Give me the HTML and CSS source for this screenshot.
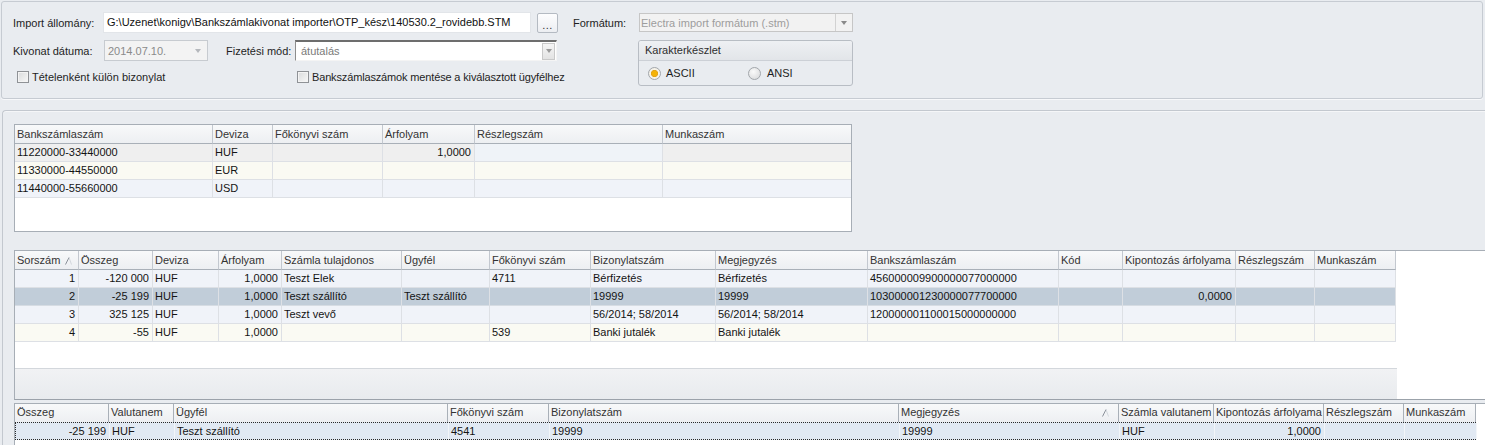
FILE: index.html
```html
<!DOCTYPE html>
<html lang="hu">
<head>
<meta charset="utf-8">
<title>Bankszámlakivonat import</title>
<link rel="stylesheet" href="styles.css">
</head>
<body>
<div class="top-panel">
  <div class="form-left">
    <div class="frow r1">
      <span class="lbl w-imp">Import állomány:</span>
      <div class="textbox">G:\Uzenet\konigv\Bankszámlakivonat importer\OTP_kész\140530.2_rovidebb.STM</div>
      <div class="btn-dots">...</div>
    </div>
    <div class="frow r2">
      <span class="lbl w-kiv">Kivonat dátuma:</span>
      <div class="combo-date"><span class="val">2014.07.10.</span><span class="tri light"></span></div>
      <span class="lbl w-fiz">Fizetési mód:</span>
      <div class="combo-pay"><span class="val">átutalás</span><span class="arrow-btn"><span class="tri"></span></span></div>
    </div>
    <div class="frow r3">
      <span class="check c1"><i class="box"></i>Tételenként külön bizonylat</span>
      <span class="check c2"><i class="box"></i>Bankszámlaszámok mentése a kiválasztott ügyfélhez</span>
    </div>
  </div>
  <div class="form-right">
    <div class="frow r1">
      <span class="lbl w-fmt">Formátum:</span>
      <div class="combo-fmt"><span class="val">Electra import formátum (.stm)</span><span class="sep-btn"><span class="tri"></span></span></div>
    </div>
    <div class="group">
      <div class="group-head">Karakterkészlet</div>
      <div class="group-body">
        <span class="radio on"><i></i>ASCII</span>
        <span class="radio off"><i></i>ANSI</span>
      </div>
    </div>
  </div>
</div>

<div class="main-panel">
  <div class="grid g1">
    <div class="row head">
      <div class="c">Bankszámlaszám</div><div class="c">Deviza</div><div class="c">Főkönyvi szám</div><div class="c">Árfolyam</div><div class="c">Részlegszám</div><div class="c">Munkaszám</div>
    </div>
    <div class="row focus">
      <div class="c">11220000-33440000</div><div class="c">HUF</div><div class="c"></div><div class="c r">1,0000</div><div class="c blue"></div><div class="c"></div>
    </div>
    <div class="row cream">
      <div class="c">11330000-44550000</div><div class="c">EUR</div><div class="c"></div><div class="c"></div><div class="c"></div><div class="c"></div>
    </div>
    <div class="row blue">
      <div class="c">11440000-55660000</div><div class="c">USD</div><div class="c"></div><div class="c"></div><div class="c"></div><div class="c"></div>
    </div>
  </div>

  <div class="grid g2">
    <div class="row head">
      <div class="c sorted">Sorszám <svg class="sort" width="7" height="8" viewBox="0 0 7 8"><path d="M0.5 7.5 L4 0.5" stroke="#8a9099" stroke-width="1" fill="none"/><path d="M4 0.5 L6.5 7.5" stroke="#d3d7dc" stroke-width="1" fill="none"/></svg></div>
      <div class="c">Összeg</div><div class="c">Deviza</div><div class="c">Árfolyam</div><div class="c">Számla tulajdonos</div><div class="c">Ügyfél</div><div class="c">Főkönyvi szám</div><div class="c">Bizonylatszám</div><div class="c">Megjegyzés</div><div class="c">Bankszámlaszám</div><div class="c">Kód</div><div class="c">Kipontozás árfolyama</div><div class="c">Részlegszám</div><div class="c">Munkaszám</div>
    </div>
    <div class="row blue">
      <div class="c r">1</div><div class="c r">-120 000</div><div class="c">HUF</div><div class="c r">1,0000</div><div class="c">Teszt Elek</div><div class="c"></div><div class="c">4711</div><div class="c">Bérfizetés</div><div class="c">Bérfizetés</div><div class="c">456000009900000077000000</div><div class="c"></div><div class="c"></div><div class="c"></div><div class="c"></div>
    </div>
    <div class="row sel">
      <div class="c r">2</div><div class="c r">-25 199</div><div class="c">HUF</div><div class="c r">1,0000</div><div class="c">Teszt szállító</div><div class="c">Teszt szállító</div><div class="c"></div><div class="c">19999</div><div class="c">19999</div><div class="c">103000001230000077700000</div><div class="c"></div><div class="c r">0,0000</div><div class="c"></div><div class="c"></div>
    </div>
    <div class="row blue">
      <div class="c r">3</div><div class="c r">325 125</div><div class="c">HUF</div><div class="c r">1,0000</div><div class="c">Teszt vevő</div><div class="c"></div><div class="c"></div><div class="c">56/2014; 58/2014</div><div class="c">56/2014; 58/2014</div><div class="c">120000001100015000000000</div><div class="c"></div><div class="c"></div><div class="c"></div><div class="c"></div>
    </div>
    <div class="row cream">
      <div class="c r">4</div><div class="c r">-55</div><div class="c">HUF</div><div class="c r">1,0000</div><div class="c"></div><div class="c"></div><div class="c">539</div><div class="c">Banki jutalék</div><div class="c">Banki jutalék</div><div class="c"></div><div class="c"></div><div class="c"></div><div class="c"></div><div class="c"></div>
    </div>
    <div class="g2-empty"></div>
    <div class="g2-footer"></div>
  </div>

  <div class="grid g3">
    <div class="row head">
      <div class="c">Összeg</div><div class="c">Valutanem</div><div class="c">Ügyfél</div><div class="c">Főkönyvi szám</div><div class="c">Bizonylatszám</div>
      <div class="c sorted-end">Megjegyzés<svg class="sort-r" width="7" height="8" viewBox="0 0 7 8"><path d="M0.5 7.5 L4 0.5" stroke="#8a9099" stroke-width="1" fill="none"/><path d="M4 0.5 L6.5 7.5" stroke="#d3d7dc" stroke-width="1" fill="none"/></svg></div>
      <div class="c">Számla valutanem</div><div class="c">Kipontozás árfolyama</div><div class="c">Részlegszám</div><div class="c">Munkaszám</div>
    </div>
    <div class="row cur">
      <div class="c r">-25 199</div><div class="c">HUF</div><div class="c">Teszt szállító</div><div class="c">4541</div><div class="c">19999</div><div class="c">19999</div><div class="c">HUF</div><div class="c r">1,0000</div><div class="c"></div><div class="c"></div>
    </div>
  </div>
</div>
</body>
</html>
```

FILE: styles.css
```css
html, body {
  margin: 0;
  padding: 0;
}
body {
  width: 1485px;
  height: 445px;
  overflow: hidden;
  background: #e9ecf0;
  font-family: "Liberation Sans", Arial, sans-serif;
  font-size: 11px;
  color: #1a1a1a;
}

/* ---------- top form panel ---------- */
.top-panel {
  box-sizing: border-box;
  margin: 1px 2px 0 1px;
  height: 98px;
  border: 1px solid #c6cbd2;
  border-radius: 3px;
  box-shadow: 0 1px 0 #f7f8fa;
  display: flex;
  padding: 10px 0 0 11px;
}
.form-left {
  width: 545px;
  flex: none;
}
.form-right {
  margin-left: 15px;
  flex: none;
}
.frow {
  display: flex;
  align-items: center;
}
.r1 { height: 21px; }
.r2 { height: 21px; margin-top: 7px; }
.r3 { height: 12px; margin-top: 10px; }

.lbl { white-space: nowrap; color: #1e1e1e; flex: none; }
.w-imp { width: 90px; }
.w-kiv { width: 91px; }
.w-fiz { width: 69px; margin-left: 18px; }
.w-fmt { width: 66px; }

.textbox {
  box-sizing: border-box;
  width: 428px;
  height: 21px;
  flex: none;
  background: #fff;
  border: 1px solid #e2e5e9;
  padding: 0 0 0 3px;
  line-height: 19px;
  white-space: nowrap;
  overflow: hidden;
  color: #111;
}
.btn-dots {
  box-sizing: border-box;
  flex: none;
  margin-left: 6px;
  width: 21px;
  height: 20px;
  margin-top: 1px;
  border: 1px solid #b4bac2;
  border-radius: 2px;
  background: linear-gradient(#fdfdfe, #eceef2);
  text-align: center;
  line-height: 22px;
  color: #333;
  letter-spacing: 0.5px;
}

.tri {
  display: inline-block;
  width: 0;
  height: 0;
  border-left: 3.5px solid transparent;
  border-right: 3.5px solid transparent;
  border-top: 4px solid #7c7f84;
}
.tri.light { border-top-color: #b5b8bc; }

.combo-date {
  box-sizing: border-box;
  flex: none;
  width: 104px;
  height: 21px;
  border: 1px solid #c7cbd0;
  background: #f3f3f3;
  display: flex;
  align-items: center;
  justify-content: space-between;
  padding: 0 6px 0 3px;
  color: #8a8a8a;
}
.combo-pay {
  box-sizing: border-box;
  flex: none;
  width: 262px;
  height: 21px;
  border-top: 2px solid #6d6d6d;
  border-left: 1px solid #8d8d8d;
  border-right: 1px solid #f4f4f4;
  border-bottom: 1px solid #f4f4f4;
  background: #fff;
  display: flex;
  align-items: center;
  justify-content: space-between;
  padding: 0 0 0 5px;
  color: #7a7a7a;
}
.arrow-btn {
  box-sizing: border-box;
  width: 13px;
  height: 17px;
  margin-right: 1px;
  border: 1px solid #c9c9c9;
  background: linear-gradient(#f5f5f5, #e3e3e3);
  display: flex;
  align-items: center;
  justify-content: center;
}
.arrow-btn .tri { border-top-color: #9b9b9b; }

.combo-fmt {
  box-sizing: border-box;
  flex: none;
  width: 214px;
  height: 19px;
  border: 1px solid #c6c6c6;
  background: #f2f2f2;
  display: flex;
  align-items: center;
  justify-content: space-between;
  padding-left: 1px;
  color: #9d9d9d;
}
.sep-btn {
  box-sizing: border-box;
  width: 17px;
  height: 17px;
  border-left: 1px solid #d2d2d2;
  display: flex;
  align-items: center;
  justify-content: center;
}
.sep-btn .tri { border-top-color: #8a8a8a; }

.check {
  display: inline-flex;
  align-items: center;
  white-space: nowrap;
  color: #1e1e1e;
  flex: none;
}
.check.c1 { margin-left: 4px; width: 280px; }
.check.c2 { letter-spacing: -0.15px; }
.check .box {
  box-sizing: border-box;
  width: 12px;
  height: 12px;
  border: 1px solid #8f9296;
  background: linear-gradient(135deg, #dadbdc, #f8f8f8);
  box-shadow: inset 0 0 0 1px #f4f4f4;
  margin-right: 3px;
  flex: none;
}

.group {
  box-sizing: border-box;
  margin: 7px 0 0 65px;
  width: 215px;
  height: 46px;
  border: 1px solid #b8bdc4;
  border-radius: 3px;
  overflow: hidden;
}
.group-head {
  height: 19px;
  border-bottom: 1px solid #ccd0d6;
  background: linear-gradient(#eef0f3, #e2e5e9);
  padding-left: 6px;
  line-height: 19px;
  color: #2e2e2e;
}
.group-body {
  display: flex;
  align-items: center;
  height: 24px;
  padding-left: 9px;
}
.radio {
  display: inline-flex;
  align-items: center;
  color: #1e1e1e;
  flex: none;
}
.radio i {
  box-sizing: border-box;
  width: 13px;
  height: 13px;
  border-radius: 50%;
  border: 1px solid #a2a6ab;
  margin-right: 5px;
  flex: none;
}
.radio.on { width: 100px; }
.radio.on i {
  background: radial-gradient(circle, #f6b400 0, #f3b10a 2.4px, #dfa11a 3.4px, #f8f3e6 3.8px, #eeeeee 100%);
}
.radio.off i {
  background: radial-gradient(circle at 40% 35%, #fafafa, #d5d6d8);
  margin-right: 6px;
}

/* ---------- lower panel ---------- */
.main-panel {
  margin: 11px 0 0 2px;
  border-top: 1px solid #c3c8cf;
  border-left: 1px solid #c3c8cf;
  border-top-left-radius: 4px;
  box-shadow: inset 0 1px 0 #f5f6f8;
  padding: 13px 0 0 11px;
  height: 340px;
}

.grid {
  background: #fff;
}
.row {
  display: grid;
}
.c {
  box-sizing: border-box;
  border-right: 1px solid #dde0e5;
  border-bottom: 1px solid #dde0e5;
  padding: 0 2px 0 2px;
  white-space: nowrap;
  overflow: hidden;
  height: 18px;
  line-height: 17px;
  color: #141414;
}
.c.r { text-align: right; padding-right: 3px; }
.head .c {
  height: 19px;
  line-height: 18px;
  background: linear-gradient(#f8f9fa, #edeff2);
  border-right-color: #c3c8cf;
  border-bottom-color: #a9b0b8;
  color: #333;
}
.row.focus .c { background: #efefef; }
.row.focus .c.blue { background: #eff3f8; }
.row.cream .c { background: #fafaf3; }
.row.blue .c { background: #f0f3f9; }
.row.sel .c { background: #c1cdd9; border-bottom-color: #d6dce3; }

.g1 {
  box-sizing: border-box;
  width: 838px;
  height: 108px;
  border: 1px solid #a7aeb6;
}
.g1 .row {
  grid-template-columns: 198px 60px 110px 92px 188px 188px;
}
.g1 .row .c:last-child { border-right: none; }

.g2 {
  margin-top: 18px;
  border-top: 1px solid #a7aeb6;
  border-left: 1px solid #a7aeb6;
  border-bottom: 1px solid #9ba2aa;
  height: 148px;
}
.g2 .row {
  grid-template-columns: 64px 74px 66px 63px 120px 88px 101px 125px 152px 191px 64px 113px 79px 81px;
  width: 1381px;
}
.g2 .sorted { position: relative; }
.g2 .sort {
  position: absolute;
  left: 50px;
  top: 6px;
}
.g2-empty { height: 26px; }
.g2-footer {
  box-sizing: border-box;
  width: 1382px;
  height: 31px;
  border-top: 1px solid #d3d7dc;
  background: linear-gradient(#f1f2f4, #e8ebee);
}

.g3 {
  margin-top: 3px;
  border-top: 1px solid #a7aeb6;
  border-left: 1px solid #a7aeb6;
  height: 60px;
}
.g3 .row {
  grid-template-columns: 94px 65px 274px 101px 350px 220px 95px 110px 80px 72px;
  width: 1461px;
}
.g3 .head .c {
  height: 18px;
  line-height: 17px;
  border-bottom: none;
  border-right-color: #a9b0b8;
}
.g3 .sorted-end { position: relative; }
.g3 .sort-r {
  position: absolute;
  right: 9px;
  top: 5px;
}
.g3 .row.cur {
  box-sizing: border-box;
  width: 1461px;
  border: 1px dotted #2a2a2a;
  background: #e1e9f3;
}
.g3 .row.cur .c {
  height: 16px;
  line-height: 16px;
  border-bottom: none;
  border-right-color: #f2f5f9;
  background: #e1e9f3;
}
.g3 .row.cur .c:first-child { padding-left: 1px; }
```
